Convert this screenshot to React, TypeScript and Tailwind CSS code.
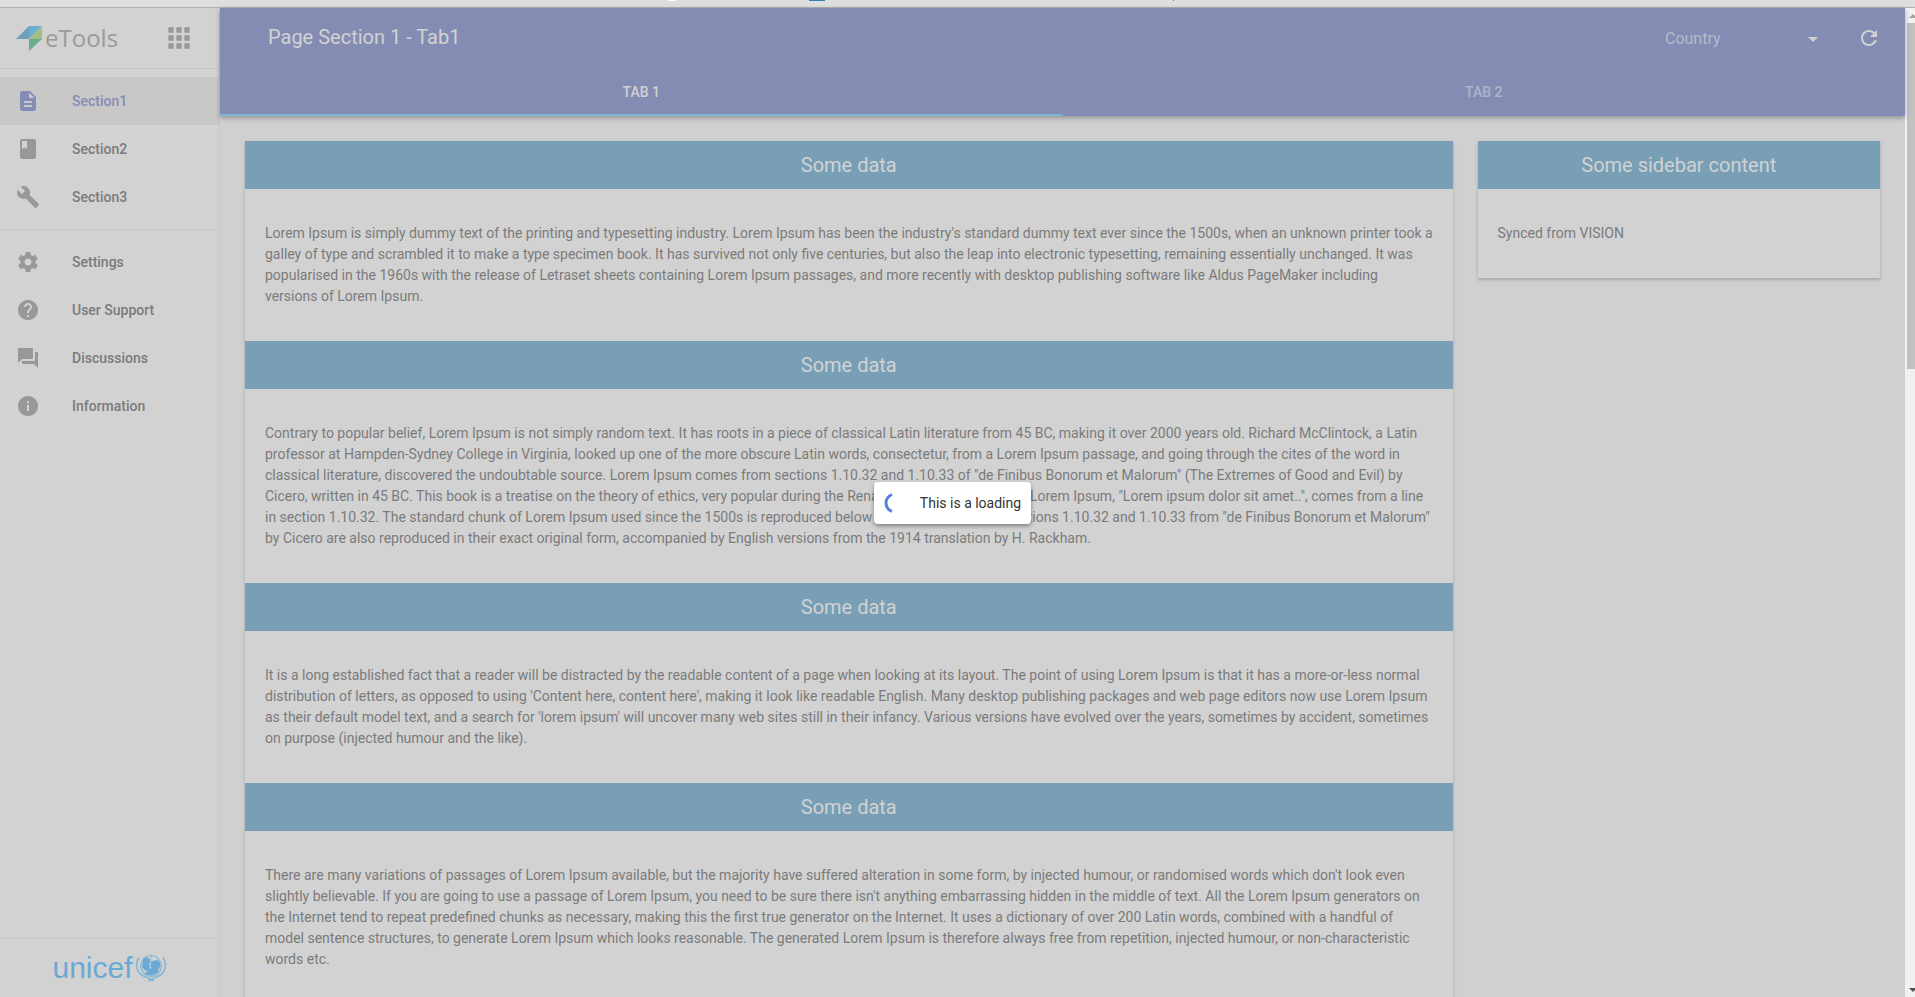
import React from "react";

const NAV_ICONS: Record<string, string> = {
  doc: "M14 2H6c-1.1 0-1.99.9-1.99 2L4 20c0 1.1.89 2 1.99 2H18c1.1 0 2-.9 2-2V8l-6-6zm2 16H8v-2h8v2zm0-4H8v-2h8v2zm-3-5V3.5L18.5 9H13z",
  book: "M18 2H6c-1.1 0-2 .9-2 2v16c0 1.1.9 2 2 2h12c1.1 0 2-.9 2-2V4c0-1.1-.9-2-2-2zM6 4h5v8l-2.500-1.500L6 12V4z",
  build: "M22.700 19l-9.100-9.100c.9-2.300.4-5-1.500-6.900-2-2-5-2.400-7.400-1.300L9 6 6 9 1.600 4.700C.4 7.100.9 10.100 2.900 12.100c1.900 1.900 4.600 2.400 6.900 1.500l9.100 9.100c.4.4 1 .4 1.400 0l2.300-2.300c.5-.4.5-1.100.1-1.400z",
  settings: "M19.430 12.980c.04-.32.07-.64.07-.98s-.03-.66-.07-.98l2.110-1.650c.19-.15.24-.42.12-.64l-2-3.460c-.12-.22-.39-.3-.61-.22l-2.490 1c-.52-.4-1.080-.73-1.690-.98l-.38-2.650C14.460 2.180 14.250 2 14 2h-4c-.25 0-.46.18-.49.42l-.38 2.650c-.61.25-1.170.59-1.690.98l-2.490-1c-.23-.09-.49 0-.61.22l-2 3.460c-.13.22-.07.49.12.64l2.110 1.650c-.04.32-.07.65-.07.98s.03.66.07.98l-2.110 1.650c-.19.15-.24.42-.12.64l2 3.460c.12.22.39.3.61.22l2.490-1c.52.4 1.080.73 1.690.98l.38 2.650c.03.24.24.42.49.42h4c.25 0 .46-.18.49-.42l.38-2.650c.61-.25 1.170-.59 1.690-.98l2.490 1c.23.09.49 0 .61-.22l2-3.460c.12-.22.07-.49-.12-.64l-2.110-1.650zM12 15.500c-1.930 0-3.500-1.570-3.500-3.500s1.570-3.500 3.500-3.500 3.500 1.570 3.500 3.500-1.570 3.500-3.500 3.500z",
  help: "M12 2C6.480 2 2 6.480 2 12s4.480 10 10 10 10-4.480 10-10S17.520 2 12 2zm1 17h-2v-2h2v2zm2.070-7.750l-.9.92C13.450 12.900 13 13.500 13 15h-2v-.5c0-1.100.45-2.100 1.170-2.830l1.240-1.260c.37-.36.59-.86.59-1.410 0-1.100-.9-2-2-2s-2 .9-2 2H8c0-2.210 1.790-4 4-4s4 1.790 4 4c0 .88-.36 1.680-.93 2.250z",
  forum: "M21 6h-2v9H6v2c0 .55.45 1 1 1h11l4 4V7c0-.55-.45-1-1-1zm-4 6V3c0-.55-.45-1-1-1H3c-.55 0-1 .45-1 1v14l4-4h10c.55 0 1-.45 1-1z",
  info: "M12 2C6.480 2 2 6.480 2 12s4.480 10 10 10 10-4.480 10-10S17.520 2 12 2zm1 15h-2v-6h2v6zm0-8h-2V7h2v2z",
  apps: "M4 8h4V4H4v4zm6 12h4v-4h-4v4zm-6 0h4v-4H4v4zm0-6h4v-4H4v4zm6 0h4v-4h-4v4zm6-10v4h4V4h-4zm-6 4h4V4h-4v4zm6 6h4v-4h-4v4zm0 6h4v-4h-4v4z",
  refresh: "M17.650 6.350C16.200 4.900 14.210 4 12 4c-4.420 0-7.990 3.580-7.990 8s3.570 8 7.990 8c3.730 0 6.840-2.550 7.730-6h-2.080c-.82 2.330-3.040 4-5.650 4-3.310 0-6-2.690-6-6s2.690-6 6-6c1.660 0 3.140.69 4.220 1.780L13 11h7V4l-2.350 2.350z",
  arrow: "M7 10l5 5 5-5z",
};

function Icon({ name, className }: { name: string; className: string }) {
  return (
    <svg viewBox="0 0 24 24" fill="currentColor" aria-hidden="true" className={className}>
      <path d={NAV_ICONS[name]} />
    </svg>
  );
}

const PRIMARY = [
  { icon: "doc", label: "Section1", active: true },
  { icon: "book", label: "Section2" },
  { icon: "build", label: "Section3" },
];

const SECONDARY = [
  { icon: "settings", label: "Settings" },
  { icon: "help", label: "User Support" },
  { icon: "forum", label: "Discussions" },
  { icon: "info", label: "Information" },
];

const SECTIONS = [
  "Lorem Ipsum is simply dummy text of the printing and typesetting industry. Lorem Ipsum has been the industry's standard dummy text ever since the 1500s, when an unknown printer took a galley of type and scrambled it to make a type specimen book. It has survived not only five centuries, but also the leap into electronic typesetting, remaining essentially unchanged. It was popularised in the 1960s with the release of Letraset sheets containing Lorem Ipsum passages, and more recently with desktop publishing software like Aldus PageMaker including versions of Lorem Ipsum.",
  "Contrary to popular belief, Lorem Ipsum is not simply random text. It has roots in a piece of classical Latin literature from 45 BC, making it over 2000 years old. Richard McClintock, a Latin professor at Hampden-Sydney College in Virginia, looked up one of the more obscure Latin words, consectetur, from a Lorem Ipsum passage, and going through the cites of the word in classical literature, discovered the undoubtable source. Lorem Ipsum comes from sections 1.10.32 and 1.10.33 of \"de Finibus Bonorum et Malorum\" (The Extremes of Good and Evil) by Cicero, written in 45 BC. This book is a treatise on the theory of ethics, very popular during the Renaissance. The first line of Lorem Ipsum, \"Lorem ipsum dolor sit amet..\", comes from a line in section 1.10.32. The standard chunk of Lorem Ipsum used since the 1500s is reproduced below for those interested. Sections 1.10.32 and 1.10.33 from \"de Finibus Bonorum et Malorum\" by Cicero are also reproduced in their exact original form, accompanied by English versions from the 1914 translation by H. Rackham.",
  "It is a long established fact that a reader will be distracted by the readable content of a page when looking at its layout. The point of using Lorem Ipsum is that it has a more-or-less normal distribution of letters, as opposed to using 'Content here, content here', making it look like readable English. Many desktop publishing packages and web page editors now use Lorem Ipsum as their default model text, and a search for 'lorem ipsum' will uncover many web sites still in their infancy. Various versions have evolved over the years, sometimes by accident, sometimes on purpose (injected humour and the like).",
  "There are many variations of passages of Lorem Ipsum available, but the majority have suffered alteration in some form, by injected humour, or randomised words which don't look even slightly believable. If you are going to use a passage of Lorem Ipsum, you need to be sure there isn't anything embarrassing hidden in the middle of text. All the Lorem Ipsum generators on the Internet tend to repeat predefined chunks as necessary, making this the first true generator on the Internet. It uses a dictionary of over 200 Latin words, combined with a handful of model sentence structures, to generate Lorem Ipsum which looks reasonable. The generated Lorem Ipsum is therefore always free from repetition, injected humour, or non-characteristic words etc.",
];

function NavItem({ icon, label, active }: { icon: string; label: string; active?: boolean }) {
  return (
    <a
      href="#"
      className={
        active
          ? "flex h-12 items-center gap-8 bg-[#c8c8c8] px-4 text-[#858cb5]"
          : "flex h-12 items-center gap-8 px-4 text-[#989898]"
      }
    >
      <Icon name={icon} className="size-6" />
      <span className={active ? "text-sm font-medium" : "text-sm font-medium text-[#7b7b7b]"}>{label}</span>
    </a>
  );
}

function Logo() {
  return (
    <div className="flex items-center gap-[3px]">
      <svg viewBox="0 0 26 25" className="h-[25px] w-[26px]" aria-hidden="true">
        <path d="M0 13 13 0v13z" fill="#729fbb" />
        <path d="M13 0h13L13 13z" fill="#68b0d0" />
        <path d="M26 0v13H13z" fill="#a4bf85" />
        <path d="M13 13h13L13 25z" fill="#6bae8b" />
      </svg>
      <span className="font-['Open_Sans',sans-serif] text-2xl leading-6 text-[#9a9a9a]">eTools</span>
    </div>
  );
}

function UnicefLogo() {
  return (
    <div className="flex items-center gap-[2px] text-[#6aa9d6]">
      <span className="font-['Liberation_Sans',sans-serif] text-[30px] leading-8">unicef</span>
      <svg viewBox="0 0 32 28" className="h-7 w-8" fill="none" stroke="currentColor" aria-hidden="true">
        <circle cx="16" cy="12" r="10.500" strokeWidth=".8" />
        <path d="M8 6c5 3 11 3 16 0M6 12h20M8 19c5-3 11-3 16 0M16 1v22M11 2c-5 6-5 14 0 20M21 2c5 6 5 14 0 20" strokeWidth=".5" />
        <path d="M4 4C-1 11 2 21 12 23.500l7 3.500M28 4c5 7 2 17-8 19.500L13 27" strokeWidth="1.600" strokeDasharray="2 .7" />
        <circle cx="11.500" cy="7" r="3.600" fill="currentColor" stroke="none" />
        <circle cx="20.500" cy="11" r="4.800" fill="currentColor" stroke="none" />
        <path
          d="M8 8l5 1c2 1 1 4 2 6l2-1 6 1c1 2 0 3-1 4-3 3-9 3-12 1l3-3-3-1c-3-2-3-5-2-8z"
          fill="currentColor"
          stroke="none"
        />
      </svg>
    </div>
  );
}

function CardHeading({ children }: { children: React.ReactNode }) {
  return (
    <h2 className="flex h-12 items-center justify-center bg-[#789fb6] text-xl text-[#d2d2d2]">{children}</h2>
  );
}

const CARD = "bg-[#d2d2d2] shadow-[0_2px_2px_rgba(0,0,0,0.12),0_1px_5px_rgba(0,0,0,0.1)]";

export default function App() {
  return (
    <div className="relative flex h-screen flex-col overflow-hidden bg-[#d0d0d0] font-[Roboto,sans-serif] text-sm text-[#7b7b7b]">
      <div className="flex h-2 shrink-0 border-b border-[#b0b0b0] bg-[#dedede]">
        <span className="ml-[668px] h-px w-2 bg-white" />
        <span className="ml-[133px] h-px w-4 bg-[#2d83a8]" />
        <span className="ml-[348px] h-px w-px bg-[#58b058]" />
      </div>
      <div className="flex min-h-0 flex-1">
        <aside className="flex w-[220px] shrink-0 flex-col border-r border-[#c6c6c6] bg-[#d2d2d2]">
          <div className="flex h-[61px] shrink-0 items-center justify-between border-b border-[#c6c6c6] pr-6 pl-4">
            <Logo />
            <button type="button" aria-label="Applications" className="text-[#989898]">
              <Icon name="apps" className="size-8" />
            </button>
          </div>
          <nav className="flex-1">
            <div className="border-b border-[#c6c6c6] py-2">
              {PRIMARY.map((item) => (
                <NavItem key={item.label} {...item} />
              ))}
            </div>
            <div className="py-2">
              {SECONDARY.map((item) => (
                <NavItem key={item.label} {...item} />
              ))}
            </div>
          </nav>
          <div className="flex h-[59px] items-center justify-center border-t border-[#c6c6c6]">
            <UnicefLogo />
          </div>
        </aside>

        <div className="flex min-w-0 flex-1 flex-col">
          <header className="z-10 shrink-0 bg-[#858cb3] text-[#d2d2d2] shadow-[0_2px_5px_rgba(0,0,0,0.3)]">
            <div className="flex h-15 items-center pr-6 pl-12">
              <h1 className="flex-1 pb-[2px] text-xl">Page Section 1 - Tab1</h1>
              <button type="button" className="flex w-40 items-center justify-between pt-[2px] text-base text-[#b6b9cb]">
                Country
                <Icon name="arrow" className="size-6 text-[#d2d2d2]" />
              </button>
              <button type="button" aria-label="Refresh" className="ml-8">
                <Icon name="refresh" className="size-6" />
              </button>
            </div>
            <div role="tablist" className="grid h-12 grid-cols-2 font-medium">
              <button type="button" role="tab" aria-selected="true" className="border-b-2 border-[#7db6d2] pt-[2px]">
                TAB 1
              </button>
              <button type="button" role="tab" aria-selected="false" className="border-b-2 border-transparent pt-[2px] text-[#b0b4ca]">
                TAB 2
              </button>
            </div>
          </header>
          <main className="flex min-h-0 flex-1 items-start gap-[25px] overflow-hidden p-[25px]">
            <div className={`${CARD} min-w-0 flex-[3]`}>
              {SECTIONS.map((text) => (
                <section key={text}>
                  <CardHeading>Some data</CardHeading>
                  <p className="py-[34px] pr-[19px] pl-5 leading-[21px]">{text}</p>
                </section>
              ))}
            </div>
            <div className={`${CARD} min-w-0 flex-1`}>
              <CardHeading>Some sidebar content</CardHeading>
              <p className="py-[34px] pr-[19px] pl-5 leading-[21px]">Synced from VISION</p>
            </div>
          </main>
        </div>

        <div className="flex w-[10px] shrink-0 flex-col overflow-hidden bg-[#f1f1f1] pl-[2px]" aria-hidden="true">
          <svg viewBox="0 0 8 15" className="h-[15px] w-2 shrink-0" fill="#a3a3a3">
            <path d="M2 10l4-4 4 4z" />
          </svg>
          <div className="h-[346px] bg-[#c1c1c1]" />
          <svg viewBox="0 0 8 15" className="mt-auto h-[15px] w-2 shrink-0" fill="#505050">
            <path d="M2 6h8l-4 4z" />
          </svg>
        </div>
      </div>

      <div className="absolute inset-0 z-20 flex items-center justify-center pt-2 pr-[10px]">
        <div
          role="status"
          className="flex h-[42px] items-center rounded bg-white pr-[10px] pl-2 text-[#333333] shadow-[0_2px_4px_rgba(0,0,0,0.4)]"
        >
          <svg viewBox="0 0 20 20" className="size-5" fill="none" stroke="#5680e0" strokeWidth="3" aria-hidden="true">
            <path d="M10 1.500C2 5 2 15 10 18.500" />
          </svg>
          <span className="ml-[18px]">This is a loading</span>
        </div>
      </div>
    </div>
  );
}
